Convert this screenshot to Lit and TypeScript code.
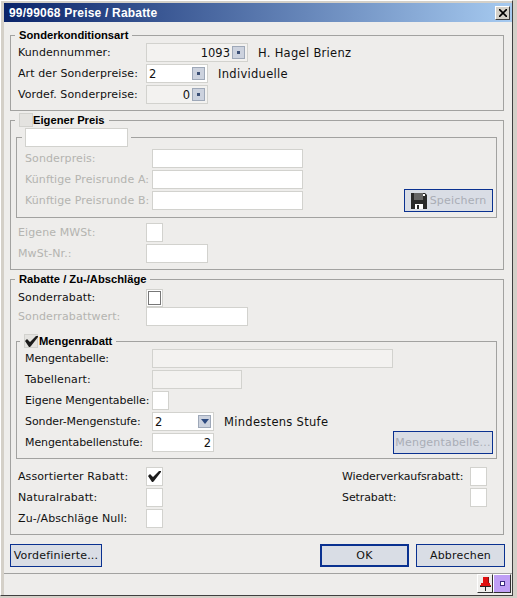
import { LitElement, html, css } from 'lit';
import { customElement } from 'lit/decorators.js';

const check = html`<svg class="tick" viewBox="0 0 13 11" width="13" height="11"><path d="M0 5l2-2 3 3 6-6h2v1l-7 9-1 1h-1z" fill="#1c1c1c"/></svg>`;

@customElement('app-root')
export class AppRoot extends LitElement {
    static styles = css`
        :host {
            display: block;
            width: 517px;
            height: 598px;
            background: #d4d0c8;
            font: 11px/14px "DejaVu Sans", sans-serif;
            color: #111;
        }
        * { box-sizing: border-box; }
        .window {
            height: 596px;
            width: 513px;
            padding: 2px 0 0 3px;
            background: #eeedeb;
            border: 1px solid #fff;
            border-right-color: #404040;
            border-bottom-color: #404040;
            box-shadow: inset 3px 2px 0 #d4d0c8;
            display: flex;
            flex-direction: column;
        }
        .title {
            height: 19px;
            flex: none;
            padding: 0 2px 0 5px;
            display: flex;
            align-items: center;
            justify-content: space-between;
            background: linear-gradient(90deg, #0a246a, #a6caf0);
            color: #fff;
            font: bold 12px "Liberation Sans", sans-serif;
            letter-spacing: 0.2px;
        }
        .close {
            width: 15px;
            height: 14px;
            background: #d4d0c8;
            border: 1px solid;
            border-color: #fff #404040 #404040 #fff;
            display: flex;
            align-items: center;
            justify-content: center;
        }
        .main {
            flex: 1;
            padding: 6px 7px 0 6px;
        }
        fieldset {
            margin: 2px 1px 0 0;
            min-width: 0;
            border: 1px solid #a2a2a0;
            padding: 1px 5px 6px 5px;
        }
        fieldset.first { margin-top: 0; }
        fieldset.inner { padding: 1px 3px 4px 8px; }
        fieldset.inner.priced { padding: 2px 3px 5px 8px; }
        legend {
            margin-left: -1px;
            padding: 0 4px;
            height: 14px;
            font: bold 11.2px/14px "Liberation Sans", sans-serif;
            display: flex;
            align-items: center;
            gap: 1px;
            color: #000;
        }
        legend.tight { margin-left: -3px; padding: 0 3px; height: 19px; }
        legend.box { gap: 0; }
        .inner legend.box { margin-left: -5px; gap: 1px; }
        .offset { padding-left: 2px; }
        .drop { padding-top: 1px; }
        .rows { display: flex; flex-direction: column; gap: 2px; }
        .row { display: flex; align-items: center; height: 19px; }
        .label { width: 128px; flex: none; letter-spacing: 0.1px; white-space: nowrap; }
        .inner .label { width: 127px; }
        .label.m { letter-spacing: -0.1px; }
        .off { color: #b4b4b0; }
        .field {
            height: 19px;
            background: #fff;
            border: 1px solid #d2d2ce;
            padding: 0 2px;
            display: flex;
            align-items: center;
            justify-content: space-between;
            font-size: 11.5px;
            color: #111;
            flex: none;
        }
        .right { justify-content: flex-end; }
        .ro { background: #f3f2f0; }
        .w62 { width: 62px; }
        .w90 { width: 90px; }
        .w101 { width: 102px; }
        .w103 { width: 103px; }
        .w151 { width: 151px; }
        .w241 { width: 241px; }
        .cb {
            width: 17px;
            height: 19px;
            background: #fff;
            border: 1px solid #d2d2ce;
            display: flex;
            align-items: center;
            justify-content: center;
            flex: none;
        }
        .cb.dark {
            height: 18px;
            padding: 1px;
        }
        .cb.dark span {
            width: 100%;
            height: 100%;
            border: 1px solid #777;
            background: #fff;
        }
        .cb.mini {
            width: 14px;
            height: 14px;
            background: #e4e3e0;
        }
        .tick { display: block; flex: none; }
        .pick {
            width: 13px;
            height: 13px;
            background: #ccd2de;
            border: 1px solid #9ea8b8;
            display: flex;
            align-items: center;
            justify-content: center;
            margin-left: 2px;
            flex: none;
        }
        .pick i { width: 3px; height: 3px; background: #3c5076; display: block; }
        .tri {
            width: 0;
            height: 0;
            border: 4px solid transparent;
            border-top: 5px solid #2c4a80;
            border-bottom: 0;
        }
        .note { margin-left: 10px; font-size: 11.5px; letter-spacing: 0.3px; }
        .split { display: flex; justify-content: space-between; align-items: flex-end; }
        .push2 { margin-bottom: 2px; }
        .btn {
            height: 23px;
            background: #d9dde5;
            border: 1px solid #0a3190;
            color: #111;
            display: flex;
            align-items: center;
            justify-content: center;
            gap: 3px;
            font: inherit;
            letter-spacing: 0.2px;
            padding: 0;
            flex: none;
        }
        .btn.off { color: #a9adb6; }
        .btn.default { border-width: 2px; }
        .w89 { width: 89px; }
        .w100 { width: 100px; }
        .w92 { width: 92px; }
        .gap5 { margin-top: 5px; }
        .gap8 { margin-top: 8px; }
        .flags { display: flex; justify-content: space-between; margin-top: 8px; padding-right: 11px; }
        .flags .right-col .label { letter-spacing: -0.1px; }
        .actions {
            display: flex;
            justify-content: space-between;
            margin-top: 9px;
        }
        .actions div { display: flex; gap: 7px; }
        .status {
            margin-top: 6px;
            height: 22px;
            flex: none;
            border-top: 1px solid #a2a2a0;
            display: flex;
            justify-content: flex-end;
            align-items: flex-start;
            padding-right: 1px;
        }
        .slot {
            width: 16px;
            height: 19px;
            border: 1px solid;
            border-color: #fff #303030 #303030 #fff;
            display: flex;
            align-items: center;
            justify-content: center;
            background: #eeedeb;
        }
        .slot.violet { background: #bf9ef5; width: 18px; }
        .slot.violet i { width: 5px; height: 5px; background: #fff; border: 1px solid #3a2a80; }
    `;

    private pickBtn() {
        return html`<span class="pick"><i></i></span>`;
    }

    render() {
        return html`
            <div class="window">
                <div class="title">
                    <span>99/99068 Preise / Rabatte</span>
                    <span class="close"><svg width="8" height="8" viewBox="0 0 8 8"><path d="M0 0l8 8M8 0l-8 8" stroke="#000" stroke-width="1.6"/></svg></span>
                </div>
                <div class="main">
                    <fieldset class="first">
                        <legend>Sonderkonditionsart</legend>
                        <div class="rows offset">
                            <div class="row">
                                <span class="label">Kundennummer:</span>
                                <span class="field ro right w101">1093${this.pickBtn()}</span>
                                <span class="note">H. Hagel Brienz</span>
                            </div>
                            <div class="row">
                                <span class="label">Art der Sonderpreise:</span>
                                <span class="field w62"><span>2</span>${this.pickBtn()}</span>
                                <span class="note">Individuelle</span>
                            </div>
                            <div class="row">
                                <span class="label">Vordef. Sonderpreise:</span>
                                <span class="field ro right w62">0${this.pickBtn()}</span>
                            </div>
                        </div>
                    </fieldset>

                    <fieldset>
                        <legend class="box"><span class="cb mini"></span>Eigener Preis</legend>
                        <fieldset class="inner priced first">
                            <legend class="tight"><span class="field w103"></span></legend>
                            <div class="split">
                                <div class="rows push2">
                                    <div class="row off"><span class="label">Sonderpreis:</span><span class="field w151"></span></div>
                                    <div class="row off"><span class="label">Künftige Preisrunde A:</span><span class="field w151"></span></div>
                                    <div class="row off"><span class="label">Künftige Preisrunde B:</span><span class="field w151"></span></div>
                                </div>
                                <button class="btn off w89">
                                    <svg width="16" height="16" viewBox="0 0 16 16"><path d="M0 0h14l2 2v14H0z" fill="#2a2a2a"/><path d="M3 0h9v7H3z" fill="#666"/><path d="M12 1h2v2h-2z" fill="#fff"/><path d="M4 11h8v5H4z" fill="#fff"/><path d="M6 12h2v4H6z" fill="#2a2a2a"/></svg>
                                    Speichern
                                </button>
                            </div>
                        </fieldset>
                        <div class="rows offset gap5">
                            <div class="row off"><span class="label">Eigene MWSt:</span><span class="cb"></span></div>
                            <div class="row off"><span class="label">MwSt-Nr.:</span><span class="field w62"></span></div>
                        </div>
                    </fieldset>

                    <fieldset>
                        <legend>Rabatte / Zu-/Abschläge</legend>
                        <div class="offset drop">
                            <div class="row"><span class="label">Sonderrabatt:</span><span class="cb dark"><span></span></span></div>
                            <div class="row off"><span class="label">Sonderrabattwert:</span><span class="field w101"></span></div>
                        </div>
                        <fieldset class="inner gap8">
                            <legend class="box"><span class="cb mini">${check}</span>Mengenrabatt</legend>
                            <div class="split">
                                <div class="rows push2">
                                    <div class="row"><span class="label m">Mengentabelle:</span><span class="field ro w241"></span></div>
                                    <div class="row"><span class="label">Tabellenart:</span><span class="field ro w90"></span></div>
                                    <div class="row"><span class="label m">Eigene Mengentabelle:</span><span class="cb"></span></div>
                                    <div class="row">
                                        <span class="label m">Sonder-Mengenstufe:</span>
                                        <span class="field w62"><span>2</span><span class="pick"><span class="tri"></span></span></span>
                                        <span class="note">Mindestens Stufe</span>
                                    </div>
                                    <div class="row"><span class="label m">Mengentabellenstufe:</span><span class="field right w62">2</span></div>
                                </div>
                                <button class="btn off w100">Mengentabelle...</button>
                            </div>
                        </fieldset>
                        <div class="flags offset">
                            <div class="rows">
                                <div class="row"><span class="label">Assortierter Rabatt:</span><span class="cb">${check}</span></div>
                                <div class="row"><span class="label">Naturalrabatt:</span><span class="cb"></span></div>
                                <div class="row"><span class="label">Zu-/Abschläge Null:</span><span class="cb"></span></div>
                            </div>
                            <div class="rows right-col">
                                <div class="row"><span class="label">Wiederverkaufsrabatt:</span><span class="cb"></span></div>
                                <div class="row"><span class="label">Setrabatt:</span><span class="cb"></span></div>
                            </div>
                        </div>
                    </fieldset>

                    <div class="actions">
                        <button class="btn w92">Vordefinierte...</button>
                        <div>
                            <button class="btn default w89">OK</button>
                            <button class="btn w89">Abbrechen</button>
                        </div>
                    </div>
                </div>
                <div class="status">
                    <span class="slot"><svg width="11" height="14" viewBox="0 0 11 14"><path d="M3 0h5v6h2v2h1v1H0V8h1V6h2z" fill="#e01010"/><path d="M0 9h11v1H0z" fill="#222"/><path d="M5 10h1v4H5z" fill="#222"/><path d="M8 0h1v6H8z" fill="#801010"/></svg></span>
                    <span class="slot violet"><i></i></span>
                </div>
            </div>
        `;
    }
}
